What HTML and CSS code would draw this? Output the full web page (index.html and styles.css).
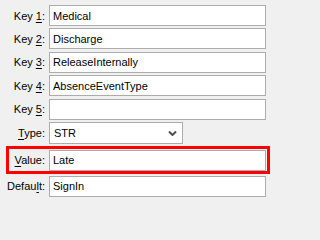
FILE: index.html
```html
<!DOCTYPE html>
<html>
<head>
<meta charset="utf-8">
<link rel="stylesheet" href="styles.css">
</head>
<body>
<div class="form">
  <div class="row">
    <div class="label"><span>Key <u>1</u>:</span></div>
    <div class="input">Medical</div>
  </div>
  <div class="row">
    <div class="label"><span>Key <u>2</u>:</span></div>
    <div class="input">Discharge</div>
  </div>
  <div class="row">
    <div class="label"><span>Key <u>3</u>:</span></div>
    <div class="input">ReleaseInternally</div>
  </div>
  <div class="row">
    <div class="label"><span>Key <u>4</u>:</span></div>
    <div class="input">AbsenceEventType</div>
  </div>
  <div class="row">
    <div class="label"><span>Key <u>5</u>:</span></div>
    <div class="input"></div>
  </div>
  <div class="row">
    <div class="label"><span><u>T</u>ype:</span></div>
    <div class="combo">
      <span>STR</span>
      <svg class="chev" width="9" height="6" viewBox="0 0 9 6"><path d="M1 1.5 L4.5 5 L8 1.5" fill="none" stroke="#505050" stroke-width="2"/></svg>
    </div>
  </div>
  <div class="row highlight">
    <div class="label"><span><u>V</u>alue:</span></div>
    <div class="input">Late</div>
  </div>
  <div class="row">
    <div class="label"><span>Defau<u>l</u>t:</span></div>
    <div class="input">SignIn</div>
  </div>
</div>
</body>
</html>
```
FILE: styles.css
```css
html, body {
  margin: 0;
  padding: 0;
  background: #f0f0f0;
}
body {
  width: 271px;
  height: 202px;
  overflow: hidden;
}
.form {
  display: flex;
  flex-direction: column;
  gap: 2.4px;
  padding: 5px 1px 0 6px;
  font-family: "Liberation Sans", Arial, sans-serif;
  font-size: 11px;
  color: #000;
}
.row {
  display: flex;
  align-items: center;
  border: 3px solid transparent;
  border-top-width: 0;
  border-bottom-width: 0;
  padding-right: 1px;
}
.row.highlight {
  border: 3px solid #ff0000;
  padding: 1px 1px 0 0;
  margin-top: -0.4px;
  margin-bottom: -0.4px;
}
.label {
  flex: none;
  width: 36px;
  display: flex;
  justify-content: flex-end;
  white-space: nowrap;
  margin-right: 4px;
}
.label u {
  text-decoration-thickness: 1px;
  text-underline-offset: 2px;
}
.input {
  flex: 1;
  height: 21px;
  box-sizing: border-box;
  border: 1px solid #acacac;
  background: #fff;
  padding: 0 3px;
  display: flex;
  align-items: center;
  white-space: nowrap;
}
.combo {
  flex: none;
  width: 134px;
  height: 22px;
  box-sizing: border-box;
  border: 1px solid #acacac;
  background: #fff;
  padding: 0 5px 0 4px;
  display: flex;
  align-items: center;
  justify-content: space-between;
}
.chev {
  display: block;
}
```
